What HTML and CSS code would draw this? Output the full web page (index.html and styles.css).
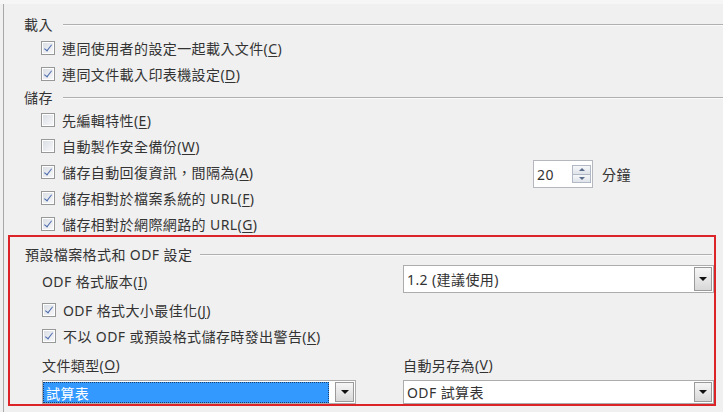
FILE: index.html
```html
<!DOCTYPE html>
<html lang="zh-TW">
<head>
    <meta charset="UTF-8">
    <meta name="viewport" content="width=device-width, initial-scale=1.0">
    <title>載入/儲存 - 一般</title>
    <link rel="stylesheet" href="styles.css">
</head>
<body>
    <div class="page">
        <div class="group">
            <div class="group-title">載入</div>
            <label class="check-row"><span class="box on"></span>連同使用者的設定一起載入文件(<u>C</u>)</label>
            <label class="check-row"><span class="box on"></span>連同文件載入印表機設定(<u>D</u>)</label>
        </div>

        <div class="group">
            <div class="group-title short">儲存</div>
            <label class="check-row"><span class="box"></span>先編輯特性(<u>E</u>)</label>
            <label class="check-row"><span class="box"></span>自動製作安全備份(<u>W</u>)</label>
            <div class="check-row">
                <label class="check-label"><span class="box on"></span>儲存自動回復資訊，間隔為(<u>A</u>)</label>
                <div class="spin-group">
                    <div class="spin">
                        <span class="spin-value">20</span>
                        <span class="spin-btns">
                            <span class="spin-btn up"></span>
                            <span class="spin-btn down"></span>
                        </span>
                    </div>
                    <span>分鐘</span>
                </div>
            </div>
            <label class="check-row"><span class="box on"></span>儲存相對於檔案系統的 URL(<u>F</u>)</label>
            <label class="check-row"><span class="box on"></span>儲存相對於網際網路的 URL(<u>G</u>)</label>
        </div>

        <div class="group odf">
            <div class="group-title">預設檔案格式和 ODF 設定</div>
            <div class="odf-body">
                <div class="field-label version-label">ODF 格式版本(<u>I</u>)</div>
                <div class="combo tall">
                    <span class="combo-text">1.2 (建議使用)</span>
                    <span class="combo-btn"><span class="arrow"></span></span>
                </div>

                <label class="check-row wide"><span class="box on"></span>ODF 格式大小最佳化(<u>J</u>)</label>
                <label class="check-row wide"><span class="box on"></span>不以 ODF 或預設格式儲存時發出警告(<u>K</u>)</label>

                <div class="field-label caption">文件類型(<u>O</u>)</div>
                <div class="field-label caption">自動另存為(<u>V</u>)</div>

                <div class="combo">
                    <span class="combo-text selected"><span class="focus">試算表</span></span>
                    <span class="combo-btn wide-btn"><span class="arrow"></span></span>
                </div>
                <div class="combo">
                    <span class="combo-text">ODF 試算表</span>
                    <span class="combo-btn"><span class="arrow"></span></span>
                </div>
            </div>
        </div>
    </div>
</body>
</html>
```

FILE: styles.css
```css
body {
    margin: 0;
    background: #f0f0f0;
    border-top: 4px solid #f6f6f6;
    font-family: "Noto Sans", "Noto Sans CJK TC", sans-serif;
    font-size: 14px;
    letter-spacing: 0.4px;
    color: #333;
    overflow: hidden;
}
.page {
    margin-left: 3px;
    border-left: 1px solid #a8a8a8;
    padding: 9px 0 0 20px;
    height: 408px;
    box-sizing: border-box;
}
u {
    text-decoration-thickness: 1px;
    text-underline-offset: 2px;
}

/* group headings with an etched rule after the text */
.group-title {
    display: flex;
    align-items: center;
    height: 22px;
    white-space: nowrap;
}
.group-title.short {
    height: 20px;
}
.group-title::after {
    content: "";
    flex: 1;
    height: 1px;
    margin-left: 10px;
    background: #b0b0b0;
    box-shadow: 0 1px 0 #fafafa;
}

/* checkbox rows */
.check-row,
.check-label {
    display: flex;
    align-items: center;
    white-space: nowrap;
}
.check-row {
    height: 26px;
    padding-left: 17px;
}
.check-label {
    flex: 1;
}
.box {
    width: 12px;
    height: 12px;
    margin-right: 7px;
    border: 1px solid #979999;
    background: linear-gradient(135deg, #d9dde3, #f8f9fb);
    box-shadow: inset 0 0 0 1px #fff;
    flex: none;
    position: relative;
}
.box.on::after {
    content: "";
    position: absolute;
    left: 4px;
    top: 1px;
    width: 3px;
    height: 7px;
    border: solid #4d6cae;
    border-width: 0 1.6px 1.6px 0;
    transform: rotate(38deg);
}

/* spin field for the autosave interval */
.spin-group {
    width: 190px;
    display: flex;
    align-items: center;
    gap: 9px;
    margin-top: 4px;
}
.spin {
    width: 60px;
    height: 28px;
    box-sizing: border-box;
    border: 1px solid #b4b7bd;
    background: #fff;
    display: flex;
    align-items: center;
}
.spin-value {
    flex: 1;
    padding-left: 3px;
}
.spin-btns {
    width: 19px;
    height: 18px;
    margin-right: 1px;
    display: flex;
    flex-direction: column;
}
.spin-btn {
    flex: 1;
    border: 1px solid #b2b9c6;
    background: linear-gradient(#f6f7f9, #dfe4ea);
    display: flex;
    align-items: center;
    justify-content: center;
}
.spin-btn + .spin-btn {
    border-top: none;
}
.spin-btn::after {
    content: "";
    border-left: 3px solid transparent;
    border-right: 3px solid transparent;
}
.spin-btn.up::after {
    border-bottom: 3px solid #5a6b8c;
}
.spin-btn.down::after {
    border-top: 3px solid #5a6b8c;
}

/* ODF section (outlined in red) */
.odf {
    margin: -2px 7px 0 -16px;
    border: 2px solid #dc2328;
    padding: 6px 0 0 15px;
    height: 171px;
    box-sizing: border-box;
}
.odf .group-title::after {
    margin-left: 8px;
    margin-right: 2px;
}
.odf-body {
    padding-left: 17px;
    display: grid;
    grid-template-columns: 314px 1fr;
    column-gap: 47px;
}
.odf-body .check-row {
    padding-left: 0;
}
.check-row.wide {
    grid-column: 1 / -1;
}
.version-label {
    padding-top: 4px;
}
.field-label {
    display: flex;
    align-items: center;
    white-space: nowrap;
}
.caption {
    height: 31px;
}
.combo.tall + .check-row {
    margin-top: 4px;
}

/* drop-down lists */
.combo {
    height: 24px;
    box-sizing: border-box;
    border: 1px solid #acacac;
    background: #fff;
    display: flex;
    align-items: stretch;
}
.combo.tall {
    height: 28px;
}
.combo-text {
    flex: 1;
    padding-left: 3px;
    display: flex;
    align-items: center;
    white-space: nowrap;
}
.combo-text.selected {
    padding: 1px 3px 0 0;
}
.focus {
    flex: 1;
    align-self: stretch;
    display: flex;
    align-items: center;
    padding-left: 2px;
    background: #3399ff;
    color: #fff;
    border: 1px dotted #1d3f70;
}
.combo-btn {
    width: 16px;
    margin: 1px 1px 1px 0;
    border: 1px solid #9a9a9a;
    background: linear-gradient(#f6f6f6, #d8d8d8);
    display: flex;
    align-items: center;
    justify-content: center;
}
.combo-btn.wide-btn {
    width: 17px;
    margin-left: 3px;
}
.arrow {
    border-left: 4px solid transparent;
    border-right: 4px solid transparent;
    border-top: 4px solid #111;
}
```
